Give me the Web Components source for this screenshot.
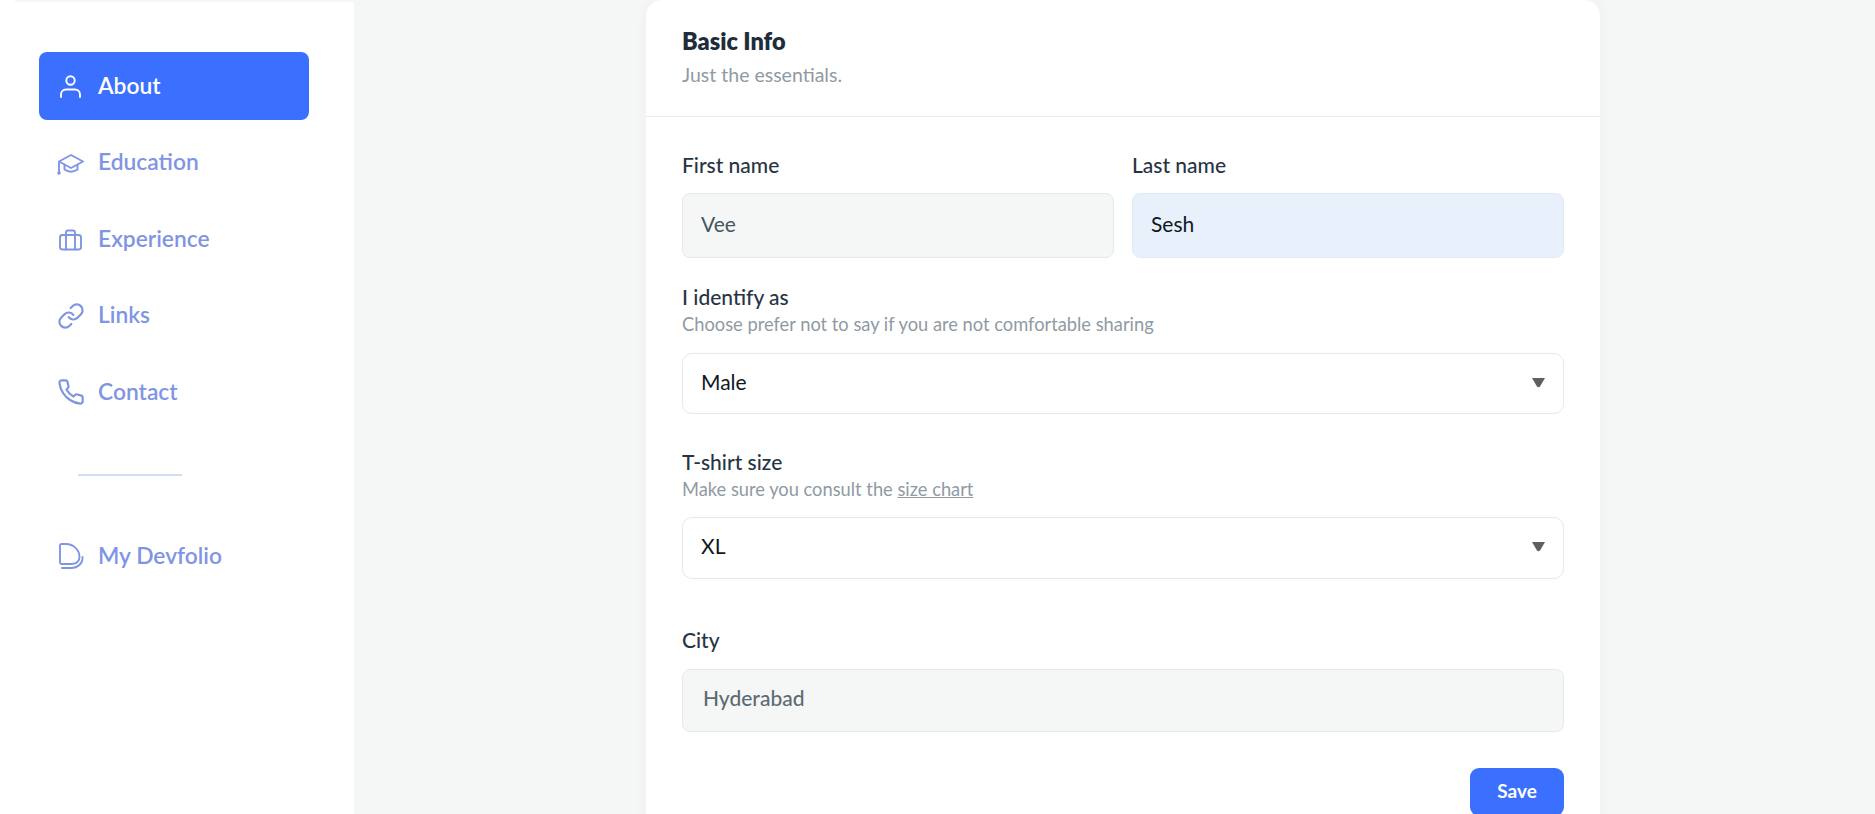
<!DOCTYPE html>
<html lang="en">
<head>
<meta charset="utf-8">
<title>Basic Info</title>
<style>
  html, body { margin: 0; height: 814px; overflow: hidden; background: #f5f7f7; }
  body { font-family: "Lato", "Noto Sans", sans-serif; color: #273444; }
</style>
</head>
<body>
<profile-page>
  <side-nav slot="nav">
    <nav-item active label="About" icon="user"></nav-item>
    <nav-item label="Education" icon="cap"></nav-item>
    <nav-item label="Experience" icon="case"></nav-item>
    <nav-item label="Links" icon="link"></nav-item>
    <nav-item label="Contact" icon="phone"></nav-item>
    <nav-item slot="after" label="My Devfolio" icon="logo"></nav-item>
  </side-nav>
  <info-card>
    <div class="row" style="display:grid;grid-template-columns:432px 432px;column-gap:18px">
      <form-field label="First name"><text-box tone="filled" tall>Vee</text-box></form-field>
      <form-field label="Last name"><text-box tone="auto" tall>Sesh</text-box></form-field>
    </div>
    <form-field label="I identify as" style="margin-top:26px">
      <span slot="hint">Choose prefer not to say if you are not comfortable sharing</span>
      <select-box>Male</select-box>
    </form-field>
    <form-field label="T-shirt size" style="margin-top:35px;--control-gap:16px">
      <span slot="hint">Make sure you consult the <u>size chart</u></span>
      <select-box style="height:62px;padding-bottom:2px">XL</select-box>
    </form-field>
    <form-field label="City" style="margin-top:48px;--control-gap:16px">
      <text-box tone="disabled" style="padding-bottom:6px;font-weight:500">Hyderabad</text-box>
    </form-field>
    <save-button style="margin-top:36px">Save</save-button>
  </info-card>
</profile-page>

<script>
const ICONS = {
  user: `<svg viewBox="0 0 28 28"><circle cx="13.5" cy="8.5" r="4.2"/><path d="M4 25v-2.5a5 5 0 0 1 5-5h9a5 5 0 0 1 5 5V25"/></svg>`,
  cap: `<svg viewBox="0 0 28 28"><path d="M14 6 26 12.500l-12 6.500L2 12.500z"/><path d="M7.500 16v4.500q6.500 4.500 13 0V16"/><path d="M2 13v10"/><circle cx="2" cy="24" r=".8"/></svg>`,
  case: `<svg viewBox="0 0 28 28"><rect x="3" y="10" width="21" height="14.500" rx="2.500"/><path d="M9 24.500V7.500a2 2 0 0 1 2-2h5a2 2 0 0 1 2 2v17"/></svg>`,
  link: `<svg viewBox="0 0 24 24"><path d="M10 13a5 5 0 0 0 7.540.540l3-3a5 5 0 0 0-7.070-7.070l-1.720 1.710"/><path d="M14 11a5 5 0 0 0-7.540-.540l-3 3a5 5 0 0 0 7.070 7.070l1.710-1.710"/></svg>`,
  phone: `<svg viewBox="0 0 24 24"><path d="M22 16.920v3a2 2 0 0 1-2.180 2 19.790 19.790 0 0 1-8.630-3.070 19.500 19.500 0 0 1-6-6 19.790 19.790 0 0 1-3.070-8.670A2 2 0 0 1 4.110 2h3a2 2 0 0 1 2 1.720 12.840 12.840 0 0 0 .7 2.810 2 2 0 0 1-.45 2.110L8.090 9.910a16 16 0 0 0 6 6l1.270-1.270a2 2 0 0 1 2.110-.45 12.840 12.840 0 0 0 2.810.7A2 2 0 0 1 22 16.920z"/></svg>`,
  logo: `<svg viewBox="0 1 28 28"><path d="M3 4.500A1.500 1.500 0 0 1 4.500 3H9c8 0 13.500 6.500 13.500 13 0 4-3 7-9 7H4.500A1.500 1.500 0 0 1 3 21.500z"/><path d="M5 27h9c7 0 12-5 11.500-11"/></svg>`
};

class ProfilePage extends HTMLElement {
  constructor() {
    super();
    this.attachShadow({ mode: 'open' }).innerHTML = `
      <style>
        :host { display: flex; height: 814px; overflow: hidden; }
        main { flex: 1; padding-left: 292px; }
      </style>
      <slot name="nav"></slot>
      <main><slot></slot></main>
    `;
  }
}

class SideNav extends HTMLElement {
  constructor() {
    super();
    this.attachShadow({ mode: 'open' }).innerHTML = `
      <style>
        :host {
          display: block;
          flex: none;
          box-sizing: border-box;
          width: 354px;
          height: 814px;
          padding: 52px 45px 0 39px;
          background: linear-gradient(#f2f3f4, #fff) 15px 0 / 339px 3px no-repeat, #fff;
        }
        .list { display: flex; flex-direction: column; gap: 8.5px; }
        hr {
          width: 104px;
          height: 2px;
          margin: 48px 0 46px 39px;
          border: 0;
          background: #d3def1;
        }
      </style>
      <div class="list"><slot></slot></div>
      <hr>
      <slot name="after"></slot>
    `;
  }
}

class NavItem extends HTMLElement {
  constructor() {
    super();
    this.attachShadow({ mode: 'open' }).innerHTML = `
      <style>
        :host {
          display: flex;
          align-items: center;
          gap: 13px;
          height: 68px;
          padding-left: 18px;
          border-radius: 8px;
          font-size: 22.800px;
          font-weight: 600;
          color: #7f95e4;
        }
        :host([active]) { background: #3b70ff; color: #fff; }
        .icon { width: 28px; height: 28px; flex: none; }
        .text { padding-bottom: 3px; }
        svg { display: block; width: 28px; height: 28px; fill: none; stroke: currentColor; stroke-width: 1.900; stroke-linecap: round; stroke-linejoin: round; }
      </style>
      <span class="icon">${ICONS[this.getAttribute('icon')]}</span>
      <span class="text">${this.getAttribute('label')}</span>
    `;
  }
}

class InfoCard extends HTMLElement {
  constructor() {
    super();
    this.attachShadow({ mode: 'open' }).innerHTML = `
      <style>
        :host {
          display: block;
          width: 954px;
          min-height: 900px;
          background: #fff;
          border-radius: 16px 16px 0 0;
          box-shadow: 0 0 14px rgba(30, 50, 70, .04);
        }
        header { box-sizing: border-box; height: 117px; padding: 27px 36px 0; border-bottom: 1px solid #e8eaeb; }
        h2 { margin: 0; font-size: 23.500px; line-height: 28px; font-weight: 800; color: #1f2d3a; }
        p { margin: 7px 0 0; font-size: 19.500px; line-height: 26px; color: #8f9aa3; }
        .body { display: flex; flex-direction: column; padding: 35px 36px 0; }
      </style>
      <header>
        <h2>Basic Info</h2>
        <p>Just the essentials.</p>
      </header>
      <div class="body"><slot></slot></div>
    `;
  }
}

class FormField extends HTMLElement {
  constructor() {
    super();
    this.attachShadow({ mode: 'open' }).innerHTML = `
      <style>
        :host { display: block; }
        label { display: block; font-size: 21px; line-height: 26px; font-weight: 500; color: #273444; }
        .hint { display: none; margin-top: 2px; font-size: 18.300px; line-height: 24px; color: #8f9aa3; }
        .hint.on { display: block; }
        .control { margin-top: var(--control-gap, 15px); }
        .hint.on + .control { margin-top: var(--control-gap, 17px); }
      </style>
      <label>${this.getAttribute('label')}</label>
      <div class="hint"><slot name="hint"></slot></div>
      <div class="control"><slot></slot></div>
    `;
    if (this.querySelector('[slot="hint"]')) {
      this.shadowRoot.querySelector('.hint').classList.add('on');
    }
  }
}

class TextBox extends HTMLElement {
  constructor() {
    super();
    this.attachShadow({ mode: 'open' }).innerHTML = `
      <style>
        :host {
          display: flex;
          align-items: center;
          box-sizing: border-box;
          height: 63px;
          padding: 0 19px 4px 20px;
          border: 1px solid #e6e9ea;
          border-radius: 8px;
          background: #f5f7f7;
          font-size: 21px;
          color: #5d6b73;
        }
        :host([tall]) { height: 65px; padding-left: 18px; }
        :host([tone="filled"]) { color: #47555e; }
        :host([tone="auto"]) { background: #e8f0fc; border-color: #e4ebf7; color: #10181f; }
      </style>
      <slot></slot>
    `;
  }
}

class SelectBox extends HTMLElement {
  constructor() {
    super();
    this.attachShadow({ mode: 'open' }).innerHTML = `
      <style>
        :host {
          display: flex;
          align-items: center;
          justify-content: space-between;
          box-sizing: border-box;
          height: 61px;
          padding: 0 18px 0 18px;
          border: 1px solid #e6e9ea;
          border-radius: 10px;
          background: #fff;
          font-size: 21px;
          color: #10181f;
        }
        span { padding-bottom: 4px; }
        svg { display: block; width: 13px; height: 10px; fill: #5c6064; margin-bottom: 1px; }
      </style>
      <span><slot></slot></span>
      <svg viewBox="0 0 13 10"><path d="M0 0h13L8 8.500q-1.500 1.500-3 0z"/></svg>
    `;
  }
}

class SaveButton extends HTMLElement {
  constructor() {
    super();
    this.attachShadow({ mode: 'open' }).innerHTML = `
      <style>
        :host {
          display: flex;
          align-items: center;
          justify-content: center;
          align-self: flex-end;
          box-sizing: border-box;
          width: 94px;
          height: 48px;
          padding-bottom: 4px;
          border-radius: 9px;
          background: #3b70ff;
          font-size: 19px;
          font-weight: 700;
          color: #fff;
        }
      </style>
      <slot></slot>
    `;
  }
}

customElements.define('profile-page', ProfilePage);
customElements.define('side-nav', SideNav);
customElements.define('nav-item', NavItem);
customElements.define('info-card', InfoCard);
customElements.define('form-field', FormField);
customElements.define('text-box', TextBox);
customElements.define('select-box', SelectBox);
customElements.define('save-button', SaveButton);
</script>
</body>
</html>
